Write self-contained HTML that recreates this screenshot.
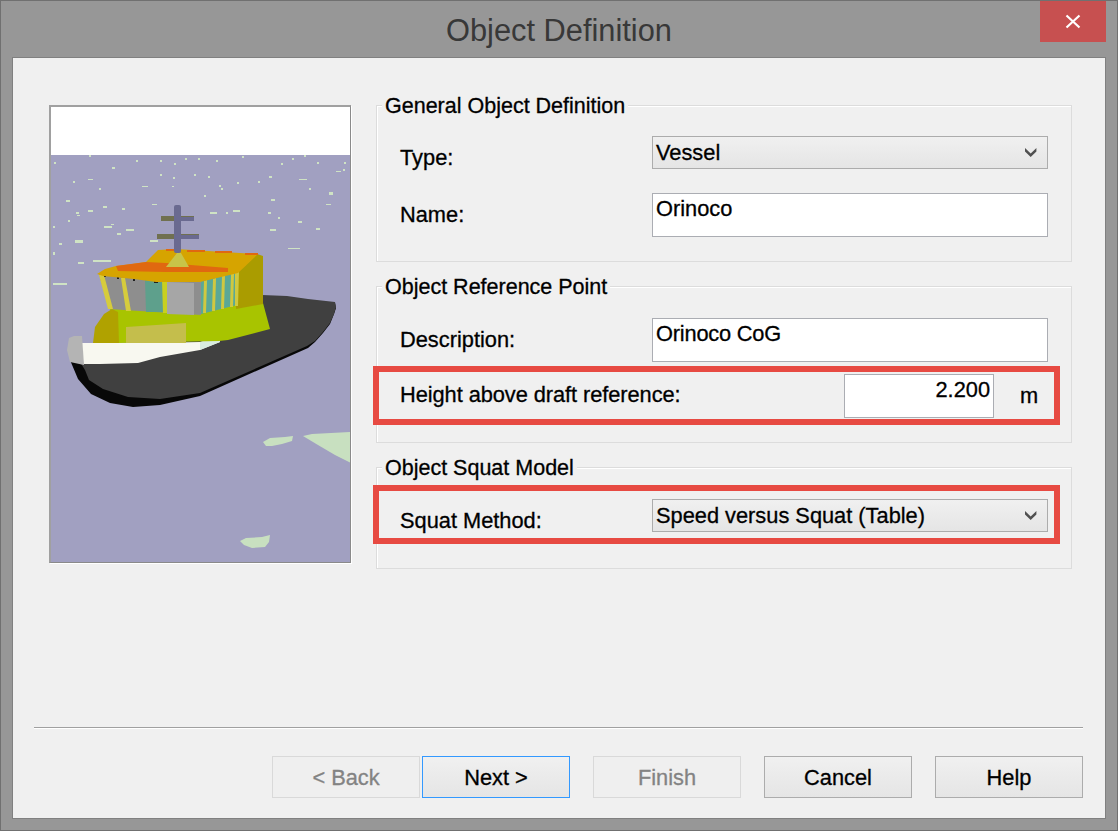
<!DOCTYPE html>
<html><head><meta charset="utf-8">
<style>
html,body{margin:0;padding:0;}
body{width:1118px;height:831px;position:relative;overflow:hidden;background:#979797;font-family:"Liberation Sans",sans-serif;color:#000;}
.abs{position:absolute;}
#frame{left:0;top:0;width:1116px;height:829px;border:1px solid #707070;}
#title{left:0;top:14px;width:1118px;text-align:center;font-size:30.8px;color:#383838;line-height:34px;}
#close{left:1040px;top:1px;width:66px;height:41px;background:#c75050;}
#content{left:12px;top:57px;width:1092px;height:760px;background:#f0f0f0;border:1px solid #808080;}
.t,.gt,.btn{-webkit-text-stroke:0.3px currentColor;}
.t{position:absolute;font-size:21.8px;line-height:24px;white-space:nowrap;}
.grp{position:absolute;border:1px solid #dcdcdc;box-shadow:inset 1px 1px 0 #fff;}
.gt{position:absolute;background:#f0f0f0;padding:0 3px 0 3px;font-size:21.5px;line-height:24px;white-space:nowrap;}
.combo{position:absolute;border:1px solid #acacac;background:linear-gradient(#f0f0f0,#e5e5e5);}
.edit{position:absolute;border:1px solid #abadb3;background:#fff;}
.red{position:absolute;border:6px solid #e74a42;}
.btn{position:absolute;border:1px solid #acacac;background:linear-gradient(#f0f0f0,#e5e5e5);text-align:center;font-size:21.8px;line-height:41px;}
.btn.dis{border-color:#d9d9d9;background:#efefef;color:#838383;}
.btn.def{border-color:#3399ff;}
</style></head><body>
<div id="frame" class="abs"></div>
<div id="title" class="abs">Object Definition</div>
<div id="close" class="abs"><svg width="66" height="41" style="position:absolute;left:0;top:0"><path d="M26.5 14.5 L39.5 26.5 M39.5 14.5 L26.5 26.5" stroke="#fff" stroke-width="2.2" fill="none"/></svg></div>
<div id="content" class="abs"></div>

<!-- picture -->
<div class="abs" style="left:49px;top:105px;width:299px;height:455px;border-top:2px solid #a0a0a0;border-left:2px solid #a0a0a0;border-right:1px solid #8a8a8a;border-bottom:1px solid #8a8a8a;box-shadow:1px 1px 0 #fff;overflow:hidden;">
<svg width="300" height="456" style="position:absolute;left:0;top:0">
<g transform="translate(-51,-107)">
<rect x="51" y="107" width="300" height="48" fill="#ffffff"/>
<rect x="51" y="155" width="300" height="410" fill="#a1a0c1"/>
<g fill="#cfe3c4"><rect x="89" y="155" width="2" height="2"/><rect x="54" y="162" width="2" height="2"/><rect x="112" y="167" width="3" height="2"/><rect x="136" y="160" width="2" height="2"/><rect x="160" y="160" width="2" height="2"/><rect x="174" y="163" width="2" height="2"/><rect x="185" y="158" width="2" height="2"/><rect x="198" y="158" width="2" height="2"/><rect x="88" y="179" width="5" height="1"/><rect x="73" y="181" width="2" height="2"/><rect x="160" y="174" width="2" height="2"/><rect x="173" y="177" width="2" height="2"/><rect x="194" y="174" width="2" height="2"/><rect x="99" y="188" width="2" height="2"/><rect x="142" y="186" width="6" height="1"/><rect x="172" y="186" width="2" height="1"/><rect x="66" y="200" width="4" height="2"/><rect x="103" y="206" width="4" height="2"/><rect x="88" y="210" width="5" height="2"/><rect x="122" y="208" width="3" height="2"/><rect x="152" y="204" width="5" height="1"/><rect x="76" y="212" width="3" height="2"/><rect x="77" y="215" width="3" height="1"/><rect x="68" y="220" width="2" height="2"/><rect x="53" y="226" width="2" height="2"/><rect x="104" y="226" width="8" height="2"/><rect x="111" y="224" width="3" height="1"/><rect x="126" y="229" width="8" height="2"/><rect x="117" y="233" width="4" height="2"/><rect x="75" y="240" width="8" height="3"/><rect x="59" y="243" width="3" height="2"/><rect x="150" y="240" width="8" height="2"/><rect x="53" y="252" width="2" height="3"/><rect x="93" y="260" width="18" height="2"/><rect x="78" y="262" width="6" height="2"/><rect x="53" y="283" width="14" height="2"/><rect x="242" y="156" width="2" height="2"/><rect x="216" y="160" width="2" height="2"/><rect x="292" y="158" width="2" height="2"/><rect x="304" y="155" width="2" height="2"/><rect x="281" y="163" width="2" height="2"/><rect x="317" y="162" width="2" height="2"/><rect x="344" y="162" width="2" height="2"/><rect x="336" y="171" width="5" height="1"/><rect x="343" y="169" width="2" height="2"/><rect x="208" y="176" width="2" height="2"/><rect x="269" y="176" width="3" height="2"/><rect x="299" y="179" width="8" height="1"/><rect x="237" y="182" width="2" height="2"/><rect x="258" y="181" width="2" height="2"/><rect x="219" y="185" width="2" height="2"/><rect x="221" y="188" width="2" height="2"/><rect x="309" y="188" width="2" height="2"/><rect x="329" y="192" width="4" height="3"/><rect x="204" y="195" width="2" height="2"/><rect x="271" y="199" width="4" height="2"/><rect x="326" y="204" width="5" height="1"/><rect x="210" y="212" width="7" height="2"/><rect x="233" y="210" width="7" height="2"/><rect x="226" y="212" width="2" height="2"/><rect x="268" y="212" width="3" height="2"/><rect x="278" y="217" width="2" height="2"/><rect x="298" y="221" width="4" height="2"/><rect x="270" y="229" width="6" height="2"/><rect x="316" y="228" width="4" height="2"/><rect x="288" y="248" width="12" height="1"/></g>
<polygon fill="#c8e0c0" points="263,442 270,438 285,437 293,436 292,441 282,444 272,446 266,446"/>
<polygon fill="#c8e0c0" points="303,436 312,434 351,432 351,463 335,455 318,445"/>
<polygon fill="#c8e0c0" points="240,541 246,538 262,537 270,535 269,542 265,547 252,548 244,545"/>
<!-- hull -->
<polygon fill="#080808" points="70,360 200,350 335,303 336,308 334,314 330,324 323,333 315,342 308,348 200,396 160,405 133,407 110,403 91,394 78,379"/>
<polygon fill="#404040" points="80,362 262,295 287,296 308,299 335,302 336,307 334,314 330,323 323,332 315,341 307,346 200,393 160,399 128,397 103,389 89,380 85,370"/>
<!-- white rail -->
<polygon fill="#f8f8f0" points="82,343 150,343 200,342 219,337 220,342 200,350 160,357 138,363 100,364 82,364"/>
<polygon fill="#d8ece0" points="200,342 219,337 220,342 200,350"/>
<polygon fill="#b4b4b4" points="69,338 74,336 82,336 84,365 70,362 67,350"/>
<!-- lower superstructure -->
<polygon fill="#a8c400" points="110,307 200,300 240,290 263,303 270,329 228,340 219,341 118,343 116,318 110,310"/>
<polygon fill="#b0a200" points="93,343 95,327 104,314 112,309 118,312 119,343"/>
<polygon fill="#c4be4c" points="126,327 186,323 186,343 126,343"/>
<polygon fill="#aa9c00" points="236,274 257,254 263,256 263,304 236,309"/>
<!-- windows front -->
<polygon fill="#8e8e8e" points="99,274 201,278 201,315 109,309"/>
<polygon fill="#d6cc3c" points="99,275 104,275 113,309 108,309"/>
<polygon fill="#d6cc3c" points="121,278 125,278 131,311 126,311"/>
<polygon fill="#5ea08c" points="145,280 163,281 163,312 146,312"/>
<polygon fill="#c8d020" points="162,281 167,281 167,313 163,313"/>
<polygon fill="#a6a6a6" points="167,282 194,283 194,315 167,314"/>
<!-- side windows -->
<polygon fill="#5aa896" points="201,280 238,270 237,305 201,314"/>
<g fill="#d0c840"><polygon points="204,281 207,280 206,313 203,313"/><polygon points="213,279 216,278 215,311 212,311"/><polygon points="222,276 225,275 224,309 221,309"/><polygon points="231,274 234,273 233,307 230,307"/><polygon points="235,272 239,271 238,306 235,306"/></g>
<g fill="#202020"><rect x="104" y="275" width="2" height="2"/><rect x="117" y="277" width="2" height="2"/><rect x="133" y="279" width="2" height="2"/><rect x="154" y="281" width="4" height="2"/></g>
<!-- roof -->
<polygon fill="#d6a400" points="97,274 105,269 116,266 132,264 146,262 158,250 176,249 258,254 238,273 200,282 156,282 134,279 103,276"/>
<polygon fill="#e06810" points="116,266 146,262 166,263 228,268 228,272 166,272 118,271"/>
<g fill="#e06810"><rect x="166" y="249" width="8" height="2"/><rect x="187" y="250" width="18" height="2"/><rect x="215" y="251" width="17" height="2"/><rect x="245" y="253" width="13" height="2"/></g>
<polygon fill="#c8c448" points="166,267 177,253 181,253 189,267"/>
<!-- mast -->
<rect x="161" y="216" width="33" height="5" fill="#707050"/>
<rect x="181" y="217" width="13" height="4" fill="#6a6a90"/>
<rect x="157" y="234" width="42" height="5" fill="#707050"/>
<rect x="181" y="235" width="18" height="4" fill="#6a6a90"/>
<rect x="174" y="205" width="7" height="48" rx="2" fill="#6a6a90"/>
</g></svg></div>


<!-- group 1 -->
<div class="grp" style="left:376px;top:105px;width:694px;height:155px;"></div>
<div class="gt" style="left:382px;top:94px;">General Object Definition</div>
<div class="t" style="left:400px;top:146px;">Type:</div>
<div class="combo" style="left:652px;top:136px;width:394px;height:31px;"><svg width="20" height="20" style="position:absolute;left:369px;top:7px"><polygon points="3,4 8.7,9.6 14.4,4 14.4,7.4 8.7,13 3,7.4" fill="#505050"/></svg></div>
<div class="t" style="left:656px;top:141px;">Vessel</div>
<div class="t" style="left:400px;top:203px;">Name:</div>
<div class="edit" style="left:652px;top:193px;width:394px;height:42px;"></div>
<div class="t" style="left:656px;top:197px;">Orinoco</div>

<!-- group 2 -->
<div class="grp" style="left:376px;top:286px;width:694px;height:155px;"></div>
<div class="gt" style="left:382px;top:275px;">Object Reference Point</div>
<div class="t" style="left:400px;top:328px;">Description:</div>
<div class="edit" style="left:652px;top:318px;width:394px;height:42px;"></div>
<div class="t" style="left:656px;top:322px;letter-spacing:-0.2px;">Orinoco CoG</div>
<div class="red" style="left:373px;top:366px;width:675px;height:47px;"></div>
<div class="t" style="left:400px;top:383px;letter-spacing:-0.06px;">Height above draft reference:</div>
<div class="edit" style="left:844px;top:374px;width:148px;height:42px;"></div>
<div class="t" style="left:844px;top:378px;width:146px;text-align:right;">2.200</div>
<div class="t" style="left:1020px;top:384px;">m</div>

<!-- group 3 -->
<div class="grp" style="left:376px;top:467px;width:694px;height:100px;"></div>
<div class="gt" style="left:382px;top:456px;">Object Squat Model</div>
<div class="red" style="left:373px;top:485px;width:675px;height:47px;"></div>
<div class="t" style="left:400px;top:509px;">Squat Method:</div>
<div class="combo" style="left:652px;top:499px;width:394px;height:31px;"><svg width="20" height="20" style="position:absolute;left:369px;top:7px"><polygon points="3,4 8.7,9.6 14.4,4 14.4,7.4 8.7,13 3,7.4" fill="#505050"/></svg></div>
<div class="t" style="left:656px;top:504px;">Speed versus Squat (Table)</div>

<!-- separator -->
<div class="abs" style="left:34px;top:727px;width:1049px;height:1px;background:#a0a0a0;border-bottom:1px solid #fff;"></div>

<div class="btn dis" style="left:272px;top:756px;width:146px;height:40px;">&lt; Back</div>
<div class="btn def" style="left:422px;top:756px;width:146px;height:40px;">Next &gt;</div>
<div class="btn dis" style="left:593px;top:756px;width:146px;height:40px;">Finish</div>
<div class="btn" style="left:764px;top:756px;width:146px;height:40px;">Cancel</div>
<div class="btn" style="left:935px;top:756px;width:146px;height:40px;">Help</div>
</body></html>
